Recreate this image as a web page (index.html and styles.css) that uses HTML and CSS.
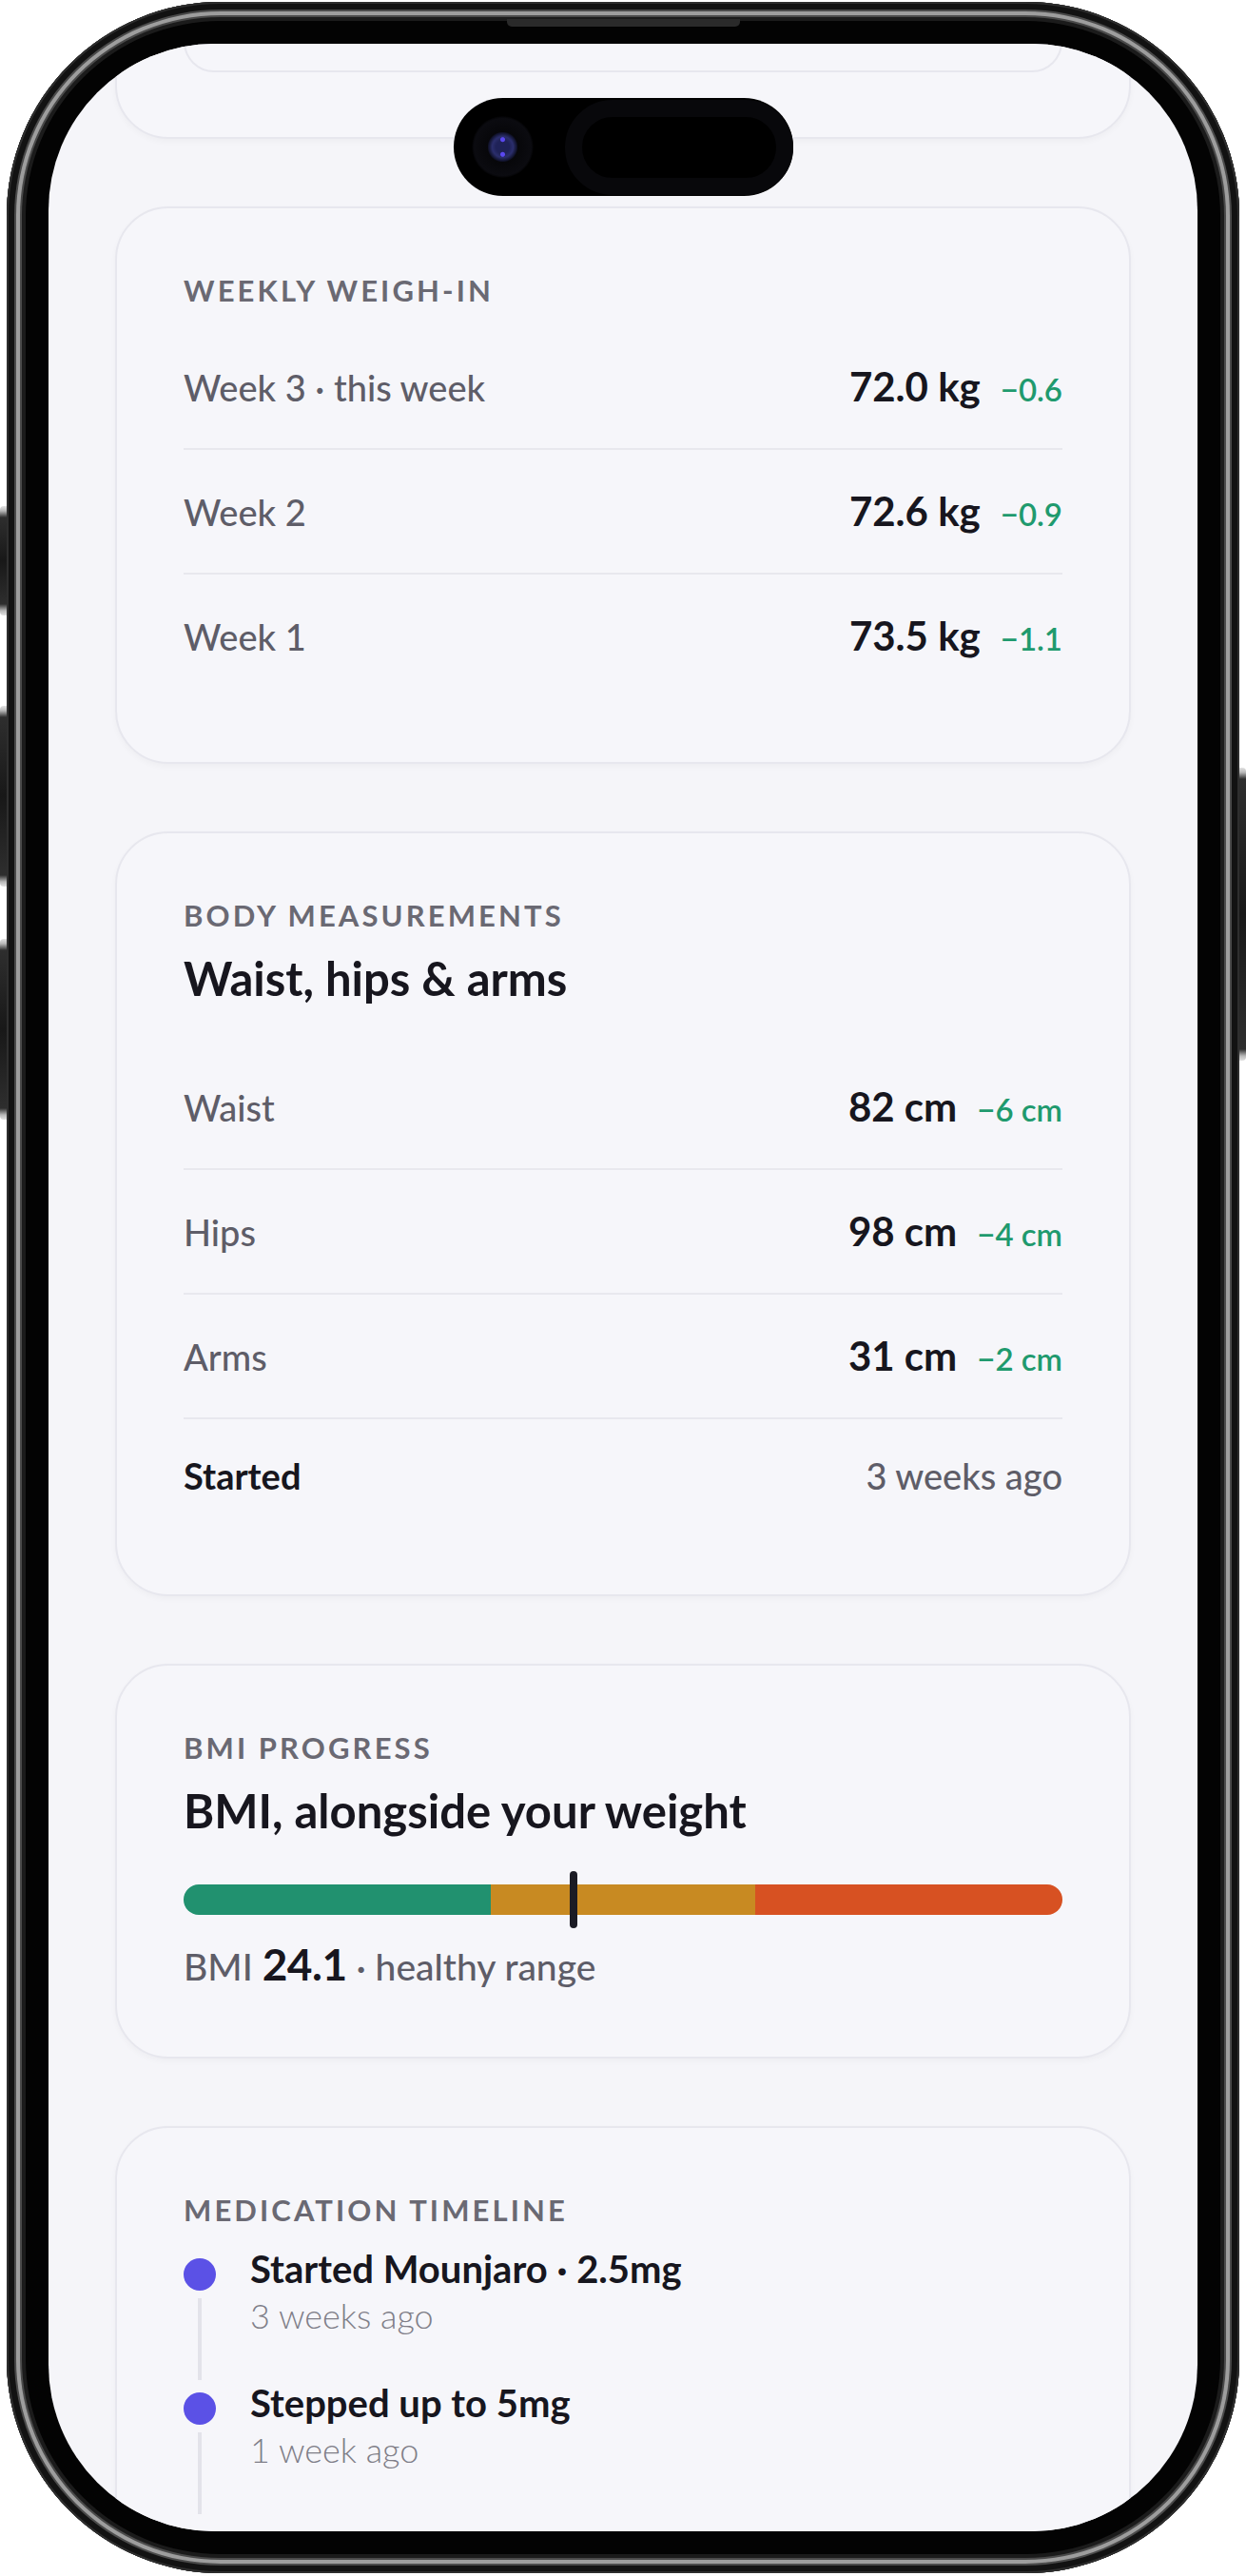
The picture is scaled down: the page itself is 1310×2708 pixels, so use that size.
FILE: index.html
```html
<!DOCTYPE html>
<html lang="en">
<head>
    <meta charset="UTF-8">
    <meta name="viewport" content="width=device-width, initial-scale=1.0">
    <title>Progress</title>
    <link rel="stylesheet" href="styles.css">
</head>
<body>

    <div class="device">
        <span class="side-btn left btn-action"></span>
        <span class="side-btn left btn-vol-up"></span>
        <span class="side-btn left btn-vol-down"></span>
        <span class="side-btn right btn-power"></span>

        <div class="phone">
            <span class="speaker"></span>

            <div class="screen">
                <div class="island">
                    <span class="lens"></span>
                    <span class="sensor"></span>
                </div>

                <div class="feed">
                    <!-- previous card, scrolled mostly out of view -->
                    <section class="card">
                        <div class="chart-box"></div>
                    </section>

                    <!-- Weekly weigh-in -->
                    <section class="card">
                        <h3 class="label">Weekly weigh-in</h3>
                        <div class="rows">
                            <div class="row">
                                <span class="row-name">Week 3 · this week</span>
                                <span class="row-value"><span class="amount">72.0 kg</span><span class="delta">−0.6</span></span>
                            </div>
                            <div class="row">
                                <span class="row-name">Week 2</span>
                                <span class="row-value"><span class="amount">72.6 kg</span><span class="delta">−0.9</span></span>
                            </div>
                            <div class="row">
                                <span class="row-name">Week 1</span>
                                <span class="row-value"><span class="amount">73.5 kg</span><span class="delta">−1.1</span></span>
                            </div>
                        </div>
                    </section>

                    <!-- Body measurements -->
                    <section class="card">
                        <h3 class="label">Body measurements</h3>
                        <h2 class="title">Waist, hips &amp; arms</h2>
                        <div class="rows spaced">
                            <div class="row">
                                <span class="row-name">Waist</span>
                                <span class="row-value"><span class="amount">82 cm</span><span class="delta">−6 cm</span></span>
                            </div>
                            <div class="row">
                                <span class="row-name">Hips</span>
                                <span class="row-value"><span class="amount">98 cm</span><span class="delta">−4 cm</span></span>
                            </div>
                            <div class="row">
                                <span class="row-name">Arms</span>
                                <span class="row-value"><span class="amount">31 cm</span><span class="delta">−2 cm</span></span>
                            </div>
                            <div class="row meta">
                                <span class="row-name strong">Started</span>
                                <span class="row-name">3 weeks ago</span>
                            </div>
                        </div>
                    </section>

                    <!-- BMI -->
                    <section class="card">
                        <h3 class="label">BMI progress</h3>
                        <h2 class="title">BMI, alongside your weight</h2>
                        <div class="bmi-scale">
                            <div class="bmi-track">
                                <span class="seg-low"></span>
                                <span class="seg-mid"></span>
                                <span class="seg-high"></span>
                            </div>
                            <span class="bmi-marker" style="left: 44.4%;"></span>
                        </div>
                        <p class="bmi-reading">BMI <strong>24.1</strong> · healthy range</p>
                    </section>

                    <!-- Medication timeline -->
                    <section class="card">
                        <h3 class="label">Medication timeline</h3>
                        <ul class="timeline">
                            <li class="step">
                                <div class="rail"><span class="dot"></span><span class="rail-line"></span></div>
                                <div class="step-body">
                                    <p class="step-title">Started Mounjaro · 2.5mg</p>
                                    <p class="step-when">3 weeks ago</p>
                                </div>
                            </li>
                            <li class="step">
                                <div class="rail"><span class="dot"></span><span class="rail-line"></span></div>
                                <div class="step-body">
                                    <p class="step-title">Stepped up to 5mg</p>
                                    <p class="step-when">1 week ago</p>
                                </div>
                            </li>
                        </ul>
                    </section>
                </div>
            </div>
        </div>
    </div>

</body>
</html>
```

FILE: styles.css
```css
* {
    box-sizing: border-box;
}
body {
    margin: 0;
    background-color: #ffffff;
    font-family: "Lato", "Liberation Sans", sans-serif;
    color: #17161e;
}

/* phone shell */
.device {
    position: relative;
    width: 1296px;
    height: 2703px;
    margin: 2px auto 0;
}
.side-btn {
    position: absolute;
    width: 12px;
    border-radius: 4px 0 0 4px;
    background: linear-gradient(to bottom, #e2e2e2 0, #b8b8b8 5px, #2e2e2e 12px, #181818 50%, #2e2e2e calc(100% - 12px), #b8b8b8 calc(100% - 5px), #e2e2e2 100%);
}
.side-btn.left {
    left: -7px;
}
.side-btn.right {
    right: -7px;
    border-radius: 0 4px 4px 0;
}
.btn-action {
    top: 530px;
    height: 115px;
}
.btn-vol-up {
    top: 740px;
    height: 190px;
}
.btn-vol-down {
    top: 985px;
    height: 190px;
}
.btn-power {
    top: 805px;
    height: 308px;
}
.phone {
    position: relative;
    height: 100%;
    padding: 44px;
    border-radius: 225px;
    background-color: #030303;
    box-shadow:
        inset 0 0 0 2px #2e2e2e,
        inset 0 0 0 8px #121212,
        inset 0 0 0 10px #4a4a4a,
        inset 0 0 0 14px #9d9d9d,
        inset 0 0 0 16px #4a4a4a,
        inset 0 0 0 20px #1b1b1b;
}
.speaker {
    position: absolute;
    top: 18px;
    left: 50%;
    width: 245px;
    height: 8px;
    margin-left: -122px;
    border-radius: 0 0 5px 5px;
    background-color: #2a2a2a;
}
.screen {
    position: relative;
    height: 100%;
    overflow: hidden;
    border-radius: 175px;
    background-color: #f5f5f9;
}
.island {
    position: absolute;
    top: 57px;
    left: 50%;
    z-index: 2;
    display: flex;
    align-items: center;
    width: 357px;
    height: 103px;
    margin-left: -178px;
    padding-left: 19px;
    border-radius: 52px;
    background-color: #000;
}
.lens {
    width: 65px;
    height: 65px;
    border-radius: 50%;
    background:
        radial-gradient(circle at 50% 38%, #5a48f0 0 2px, transparent 3px),
        radial-gradient(circle at 50% 62%, #5a48f0 0 2px, transparent 3px),
        radial-gradient(circle, #1f2258 0 7px, #2b2e6c 11px, #10122a 15px, #07070a 16px, #0b0b10 30px, #000 33px);
}
.sensor {
    width: 240px;
    height: 100px;
    margin-left: 33px;
    border: 18px solid #08080b;
    border-radius: 50px;
    background-color: #000;
}

/* scrolled content */
.feed {
    display: flex;
    flex-direction: column;
    gap: 71px;
    margin-top: -240px;
    padding: 0 70px;
}
.card {
    padding: 68px 70px;
    border: 2px solid #e7e7ee;
    border-radius: 56px;
    background-color: #f6f6fa;
    box-shadow: 0 3px 6px rgba(20, 20, 40, 0.03);
}
.chart-box {
    height: 200px;
    border: 2px solid #e7e7ee;
    border-radius: 32px;
}
.label {
    margin: 0 0 18px;
    font-size: 31px;
    font-weight: 700;
    line-height: 1.2;
    letter-spacing: 0.1em;
    text-transform: uppercase;
    color: #6a6973;
}
.title {
    margin: 8px 0 0;
    font-size: 49px;
    font-weight: 700;
    line-height: 1.2;
    color: #17161e;
}
.rows.spaced {
    margin-top: 41px;
}
.row {
    display: flex;
    align-items: baseline;
    justify-content: space-between;
    padding: 41px 0 39px;
    line-height: 46px;
    border-bottom: 2px solid #e8e8ee;
}
.row:last-child {
    border-bottom: none;
}
.row.meta {
    padding: 36px 0 34px;
}
.row-name {
    font-size: 38px;
    font-weight: 500;
    color: #5e5d68;
}
.row-name.strong {
    font-weight: 700;
    color: #17161e;
}
.row-value {
    display: flex;
    align-items: baseline;
    gap: 21px;
}
.amount {
    font-size: 42px;
    font-weight: 700;
    color: #17161e;
}
.delta {
    font-size: 33px;
    font-weight: 600;
    color: #1f9a6e;
}

/* bmi bar */
.bmi-scale {
    position: relative;
    display: flex;
    align-items: center;
    height: 60px;
    margin-top: 34px;
}
.bmi-track {
    display: flex;
    width: 100%;
    height: 32px;
    border-radius: 16px;
    overflow: hidden;
}
.seg-low {
    flex: 35;
    background-color: #21916f;
}
.seg-mid {
    flex: 30;
    background-color: #c88a22;
}
.seg-high {
    flex: 35;
    background-color: #d75122;
}
.bmi-marker {
    position: absolute;
    top: 0;
    width: 8px;
    height: 60px;
    margin-left: -4px;
    border-radius: 4px;
    background-color: #1b1b24;
}
.bmi-reading {
    margin: 10px 0 2px;
    font-size: 39px;
    font-weight: 500;
    line-height: 1.2;
    color: #5e5d68;
}
.bmi-reading strong {
    font-size: 46px;
    font-weight: 700;
    letter-spacing: -0.5px;
    color: #17161e;
}

/* timeline */
.timeline {
    margin: 3px 0 0;
    padding: 0;
    list-style: none;
}
.step {
    display: grid;
    grid-template-columns: 34px 1fr;
    column-gap: 36px;
}
.rail {
    display: flex;
    flex-direction: column;
    align-items: center;
}
.dot {
    width: 34px;
    height: 34px;
    margin-top: 13px;
    border-radius: 50%;
    background-color: #5b51e6;
}
.rail-line {
    flex: 1;
    width: 4px;
    margin-top: 8px;
    background-color: #e3e3ea;
}
.step-body {
    padding-bottom: 46px;
}
.step-title {
    margin: 0;
    font-size: 40px;
    font-weight: 700;
    line-height: 1.2;
    color: #17161e;
}
.step-when {
    margin: 4px 0 0;
    font-size: 36px;
    font-weight: 300;
    line-height: 1.2;
    color: #7f7e88;
}
```
